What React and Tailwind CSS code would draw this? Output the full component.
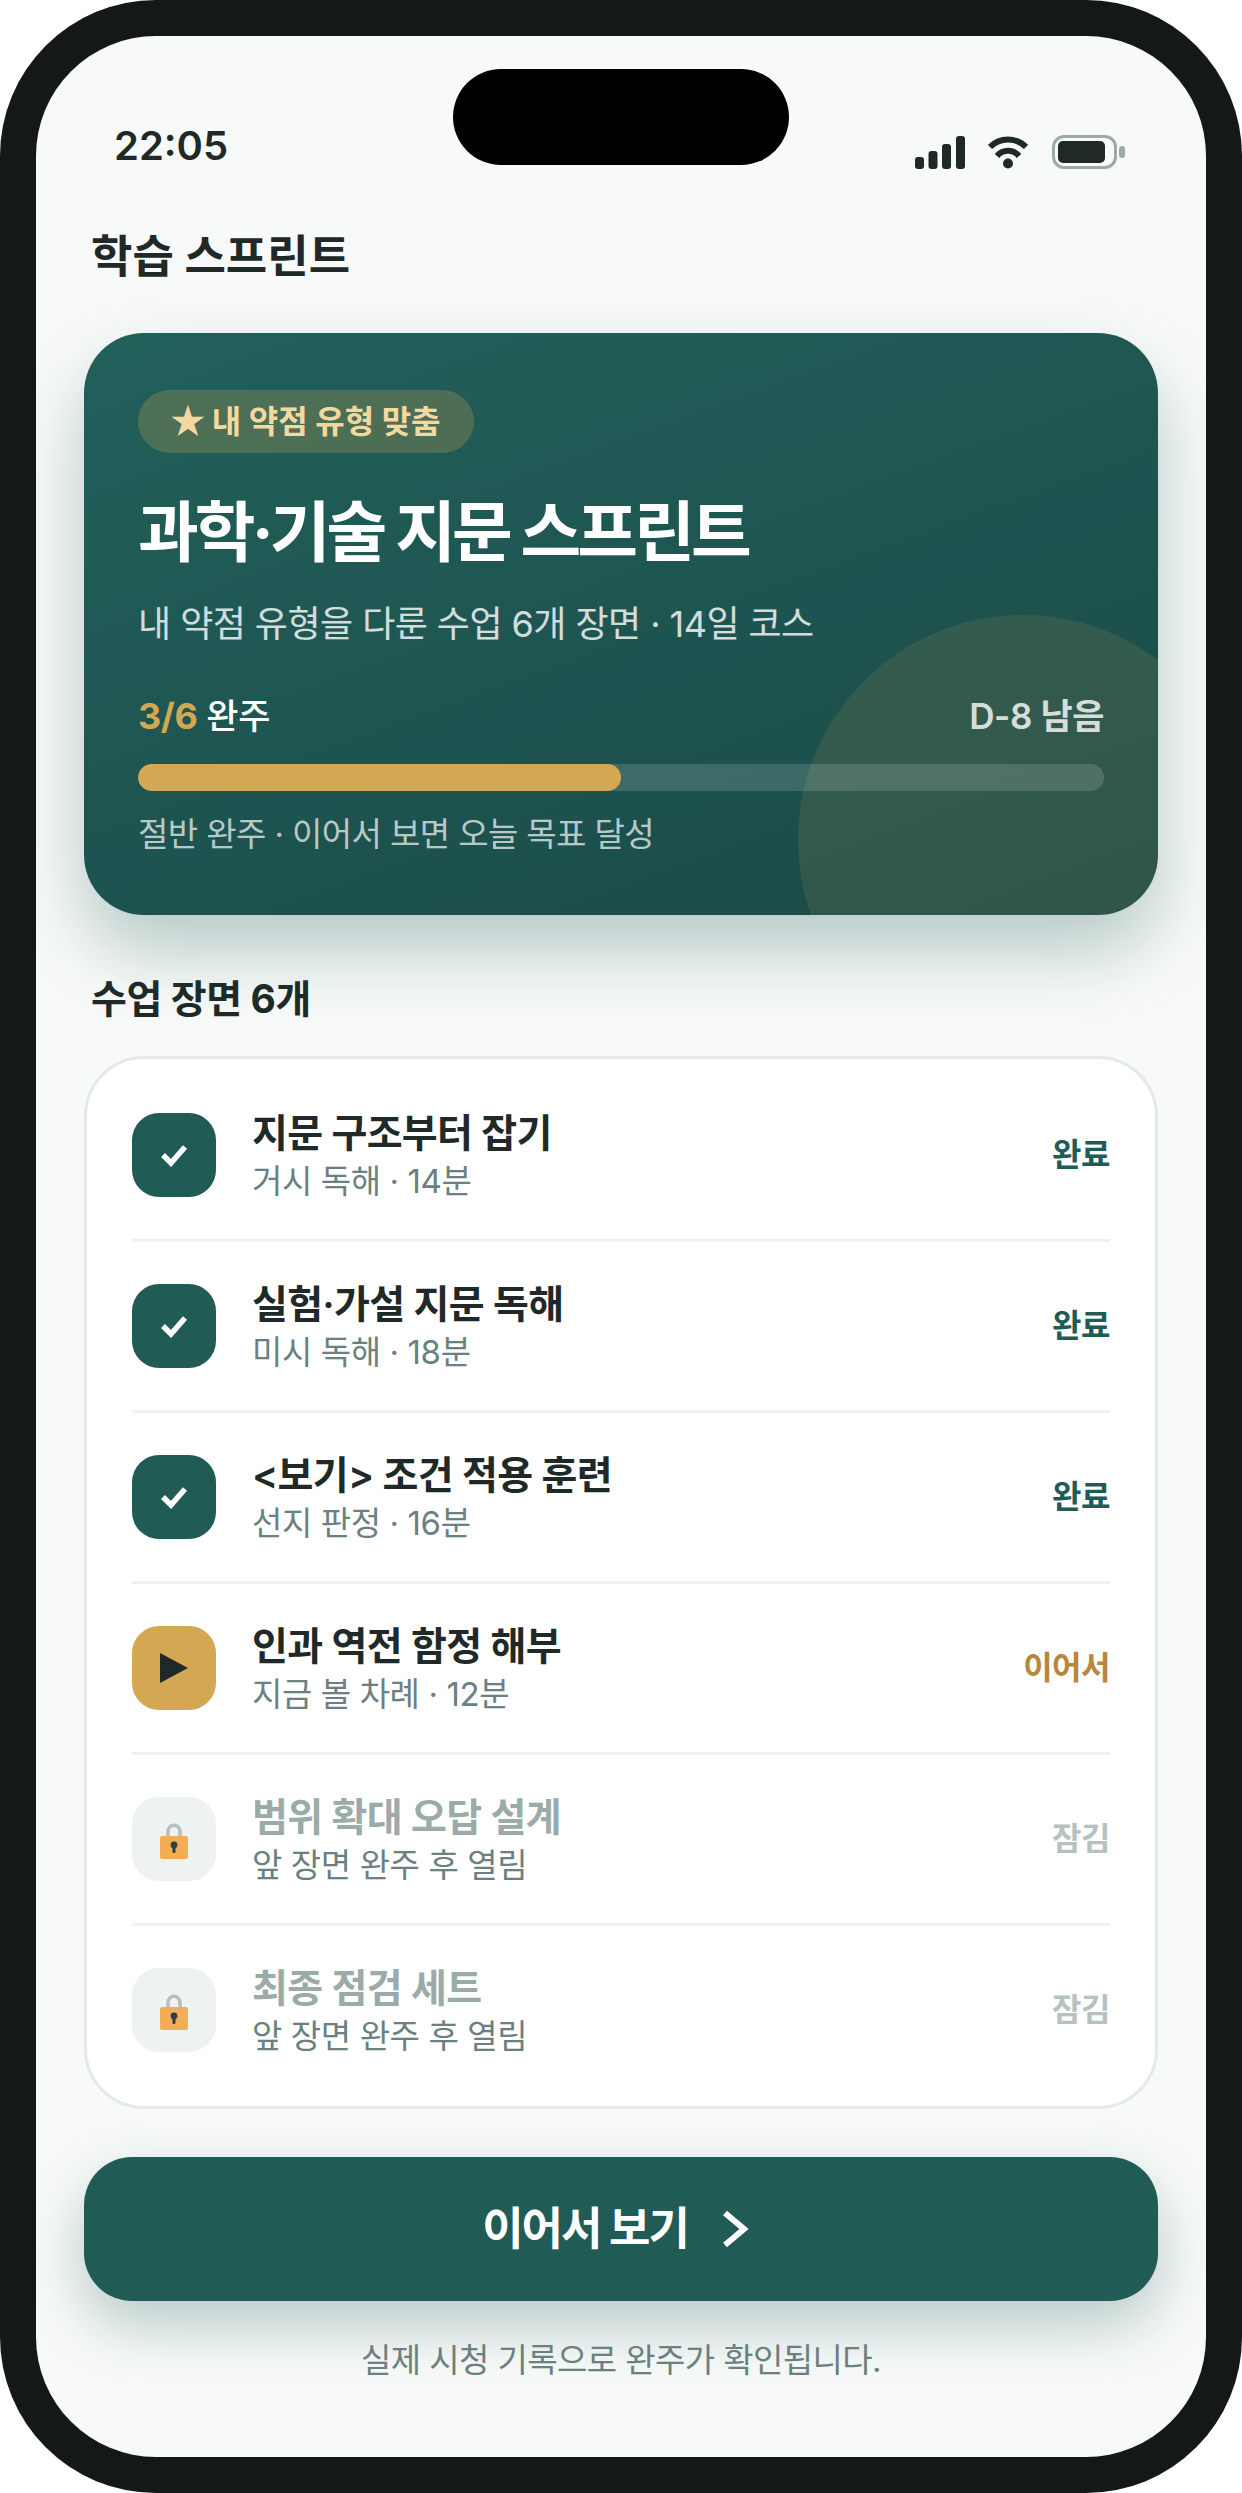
import React from "react";

const lessons = [
  { title: "지문 구조부터 잡기", sub: "거시 독해 · 14분", state: "done", label: "완료" },
  { title: "실험·가설 지문 독해", sub: "미시 독해 · 18분", state: "done", label: "완료" },
  { title: "<보기> 조건 적용 훈련", sub: "선지 판정 · 16분", state: "done", label: "완료" },
  { title: "인과 역전 함정 해부", sub: "지금 볼 차례 · 12분", state: "current", label: "이어서" },
  { title: "범위 확대 오답 설계", sub: "앞 장면 완주 후 열림", state: "locked", label: "잠김" },
  { title: "최종 점검 세트", sub: "앞 장면 완주 후 열림", state: "locked", label: "잠김" },
];

const boxStyles = {
  done: "bg-[#215b56]",
  current: "bg-[#d4a853]",
  locked: "bg-[#eef2f1]",
};

const titleStyles = {
  done: "text-[#1f2a28]",
  current: "text-[#1f2a28]",
  locked: "text-[#9aaba8]",
};

const labelStyles = {
  done: "text-[#215b56]",
  current: "text-[#b8863c]",
  locked: "text-[#b5c2c0]",
};

const StatusIcons = () => (
  <div className="flex items-center">
    <svg width="50" height="33" viewBox="0 0 50 33" fill="#1f2a28">
      <rect x="0" y="21" width="9" height="12" rx="3" />
      <rect x="13.5" y="15" width="9" height="18" rx="3" />
      <rect x="27" y="8" width="9" height="25" rx="3" />
      <rect x="41" y="0" width="9" height="33" rx="3" />
    </svg>
    <svg className="ml-[23px]" width="40" height="33" viewBox="0 0 40 33" fill="none" stroke="#1f2a28" strokeWidth="6">
      <path d="M2 11 C12 1 28 1 38 11" />
      <path d="M9 20 C15 13 25 13 31 20" />
      <circle cx="20" cy="27.5" r="5" fill="#1f2a28" stroke="none" />
    </svg>
    <div className="ml-[24px] flex items-center">
      <div className="w-[65px] h-[34px] rounded-[12px] border-[3px] border-[#9aaba8] p-[3px]">
        <div className="w-[47px] h-full rounded-[5px] bg-[#1f2a28]" />
      </div>
      <div className="ml-[2px] w-[6px] h-[12px] rounded-[3px] bg-[#9aaba8]" />
    </div>
  </div>
);

const LessonIcon = ({ state }) => {
  if (state === "done") {
    return (
      <svg width="28" height="24" viewBox="0 0 28 24" fill="none" stroke="#fff" strokeWidth="5.5">
        <path d="M3 12 L11 20 L25 4" />
      </svg>
    );
  }
  if (state === "current") {
    return (
      <svg width="30" height="30" viewBox="0 0 30 30" fill="#1f2a28">
        <path d="M1 0 L29 15 L1 30 Z" />
      </svg>
    );
  }
  return (
    <svg className="mt-[4px]" width="28" height="36" viewBox="0 0 28 36">
      <path d="M8 14 V9 C8 0 20 0 20 9 V14" fill="none" stroke="#b4c0bf" strokeWidth="3.5" />
      <rect x="0" y="13" width="28" height="23" rx="2" fill="#f5ad55" />
      <circle cx="14" cy="22" r="3.4" fill="#2d4048" />
      <rect x="12.5" y="22" width="3" height="8" rx="1.2" fill="#2d4048" />
    </svg>
  );
};

const LessonRow = ({ item, last }) => (
  <div className={`flex items-center py-[42px] ${last ? "" : "border-b-[3px] border-[#eef2f1]"}`}>
    <div className={`w-[84px] h-[84px] shrink-0 rounded-[27px] flex items-center justify-center ${boxStyles[item.state]}`}>
      <LessonIcon state={item.state} />
    </div>
    <div className="ml-[36px] flex-1 h-[84px] flex flex-col justify-center">
      <div className={`text-[39px] leading-[52px] font-semibold tracking-[-0.7px] shrink-0 ${titleStyles[item.state]}`}>{item.title}</div>
      <div className="text-[33px] leading-[44px] tracking-[-0.4px] text-[#6b8080] shrink-0">{item.sub}</div>
    </div>
    <div className={`text-[32px] font-bold tracking-[-0.5px] ${labelStyles[item.state]}`}>{item.label}</div>
  </div>
);

const App = () => {
  return (
    <div className="w-[1242px] h-[2493px] bg-white font-[Inter,'Noto_Sans_CJK_KR',sans-serif]">
      <div className="w-full h-full rounded-[156px] bg-[#141918] p-[36px]">
        <div className="relative w-full h-full rounded-[120px] bg-[#f8faf9] overflow-hidden flex flex-col px-[48px]">
          <div className="absolute top-[33px] left-[417px] w-[336px] h-[96px] rounded-[48px] bg-black" />

          <div className="mt-[85px] h-[50px] pl-[30px] flex items-center justify-between text-[#1f2a28]">
            <span className="text-[40px] font-semibold">22:05</span>
            <div className="mr-[33px] mt-[12px]">
              <StatusIcons />
            </div>
          </div>

          <h1 className="mt-[56px] pl-[7px] text-[45px] leading-[60px] font-bold text-[#1f2a28]">학습 스프린트</h1>

          <div className="relative mt-[46px] h-[582px] shrink-0 rounded-[60px] overflow-hidden bg-[linear-gradient(160deg,#22605a,#1a4a48)] px-[54px] pt-[57px] text-white shadow-[0_36px_72px_rgba(31,90,84,0.3)]">
            <div className="absolute left-[714px] top-[282px] w-[450px] h-[450px] rounded-full bg-[#d4a853]/12" />
            <div className="relative">
              <div className="inline-flex h-[63px] w-[336px] items-center pl-[30px] rounded-full bg-[#d4a853]/25 text-[32px] font-bold text-[#f3d9a0]">
                <span className="text-[38px] leading-none mr-[4px]">★</span>내 약점 유형 맞춤
              </div>
              <div className="mt-[35px] text-[66px] leading-[88px] font-bold tracking-[-3.9px]">과학·기술 지문 스프린트</div>
              <div className="mt-[23px] text-[36px] leading-[50px] tracking-[-0.55px] text-white/80">내 약점 유형을 다룬 수업 6개 장면 · 14일 코스</div>
              <div className="mt-[43px] flex justify-between text-[35px] leading-[48px] font-semibold tracking-[-0.4px]">
                <span className="font-medium">
                  <span className="text-[36px] font-bold text-[#d4a853]">3/6</span> 완주
                </span>
                <span className="text-white/80">D-8 남음</span>
              </div>
              <div className="mt-[24px] h-[27px] rounded-full bg-white/15 overflow-hidden">
                <div className="h-full w-1/2 rounded-full bg-[#d4a853]" />
              </div>
              <div className="mt-[21px] text-[33px] leading-[44px] tracking-[-0.6px] text-white/70">절반 완주 · 이어서 보면 오늘 목표 달성</div>
            </div>
          </div>

          <h2 className="mt-[58px] pl-[7px] text-[39px] leading-[52px] font-bold tracking-[-0.4px] text-[#1f2a28]">수업 장면 6개</h2>

          <div className="mt-[31px] rounded-[60px] border-[3px] border-[#e4eaea] bg-white px-[45px] py-[12px]">
            {lessons.map((item, i) => (
              <LessonRow key={item.title} item={item} last={i === lessons.length - 1} />
            ))}
          </div>

          <button className="mt-[48px] h-[144px] shrink-0 rounded-[48px] bg-[#215b56] flex items-center justify-center text-white text-[45px] font-bold tracking-[-2px] shadow-[0_24px_60px_rgba(31,90,84,0.3)]">
            이어서 보기
            <svg className="ml-[33px] mr-[11px]" width="28" height="38" viewBox="0 0 28 38" fill="none" stroke="#fff" strokeWidth="6">
              <path d="M4 3 L23 19 L4 35" />
            </svg>
          </button>

          <p className="mt-[37px] text-center text-[33px] leading-[44px] tracking-[-0.6px] text-[#6b8080]">실제 시청 기록으로 완주가 확인됩니다.</p>
        </div>
      </div>
    </div>
  );
};

export default App;
